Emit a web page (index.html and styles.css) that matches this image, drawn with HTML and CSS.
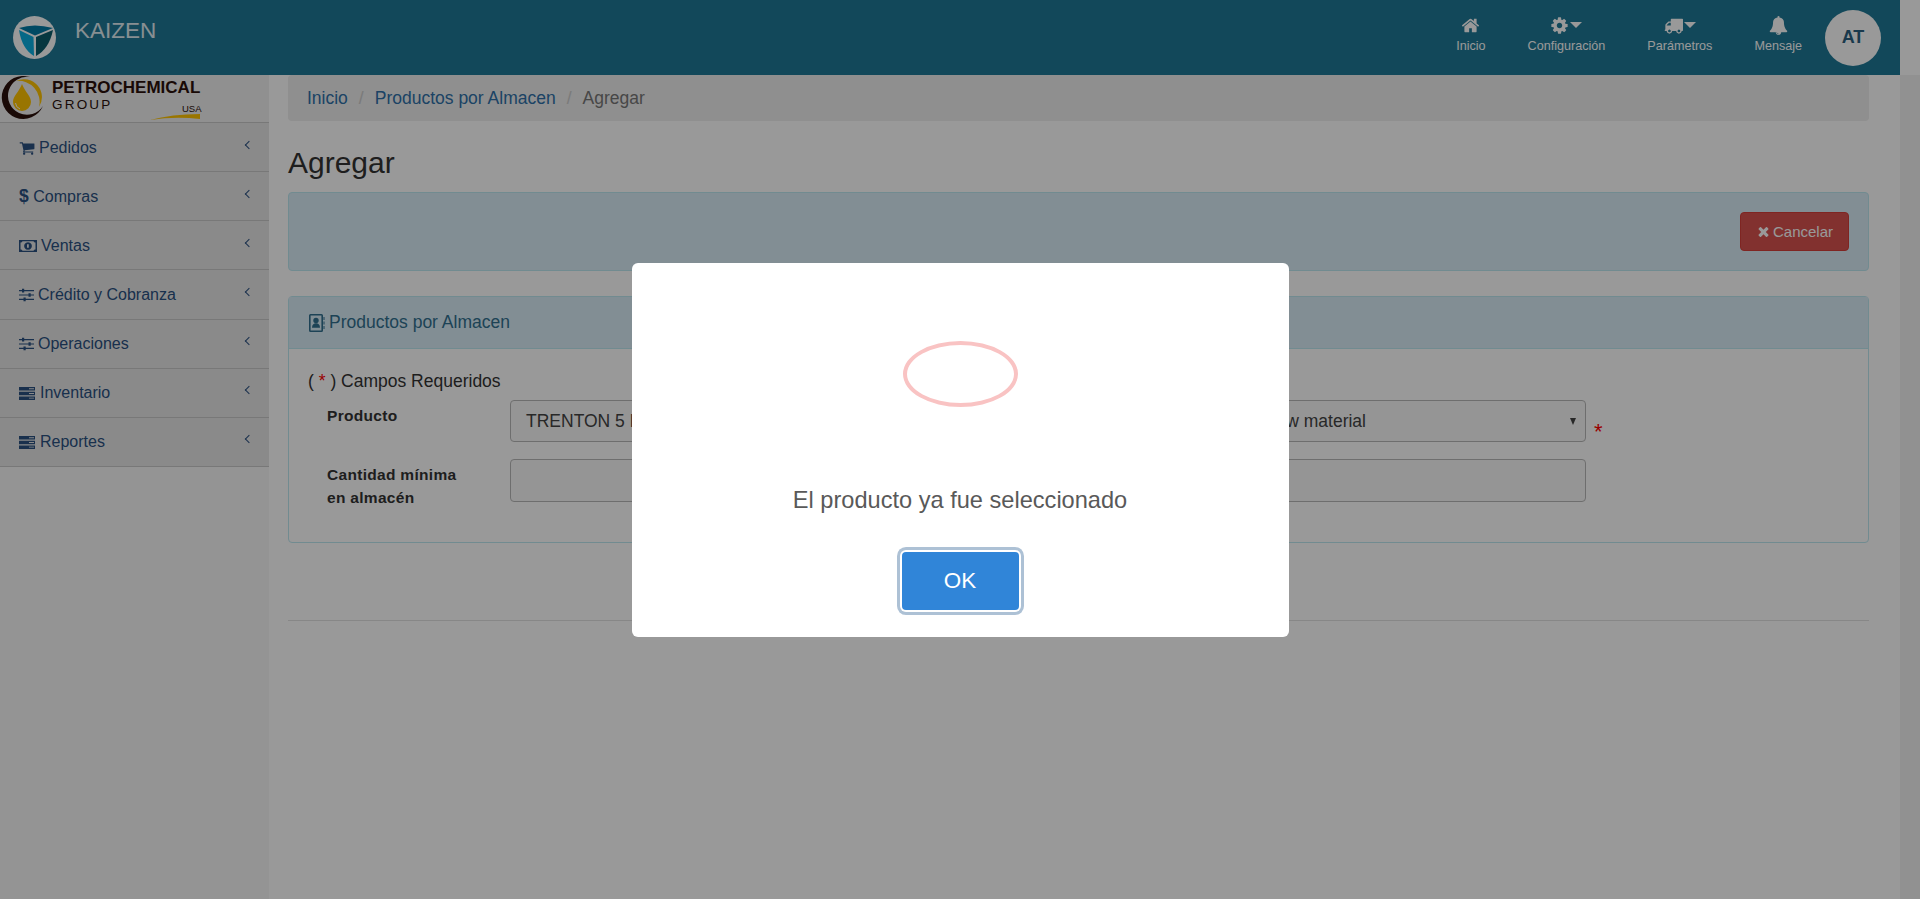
FILE: index.html
```html
<!DOCTYPE html>
<html>

<head>
  <title>Kaizen</title>
  <link rel="stylesheet" href="styles.css">
</head>

<body>
  <svg class="icon-defs" xmlns="http://www.w3.org/2000/svg">
    <symbol id="i-home" viewBox="0 0 1792 1792"><path d="M1472 992v480q0 26-19 45t-45 19h-384v-384h-256v384h-384q-26 0-45-19t-19-45v-480q0-1 .5-3t.5-3l575-474 575 474q1 2 1 6zm223-69l-62 74q-8 9-21 11h-3q-13 0-21-7l-692-577-692 577q-12 8-24 7-13-2-21-11l-62-74q-8-10-7-23.5t11-21.5l719-599q32-26 76-26t76 26l244 204v-195q0-14 9-23t23-9h192q14 0 23 9t9 23v408l219 182q10 8 11 21.5t-7 23.5z"/></symbol>
    <symbol id="i-cog" viewBox="0 0 1792 1792"><path d="M1152 896q0-106-75-181t-181-75-181 75-75 181 75 181 181 75 181-75 75-181zm512-109v222q0 12-8 23t-20 13l-185 28q-19 54-39 91 35 50 107 138 10 12 10 25t-9 23q-27 37-99 108t-94 71q-12 0-26-9l-138-108q-44 23-91 38-16 136-29 186-7 28-36 28h-222q-14 0-24.5-8.5t-11.5-21.5l-28-184q-49-16-90-37l-141 107q-10 9-25 9-14 0-25-11-126-114-165-168-7-10-7-23 0-12 8-23 15-21 51-66.5t54-70.5q-27-50-41-99l-183-27q-13-2-21-12.5t-8-23.5v-222q0-12 8-23t19-13l186-28q14-46 39-92-40-57-107-138-10-12-10-24 0-10 9-23 26-36 98.5-107.5t94.5-71.5q13 0 26 10l138 107q44-23 91-38 16-136 29-186 7-28 36-28h222q14 0 24.5 8.5t11.5 21.5l28 184q49 16 90 37l142-107q9-9 24-9 13 0 25 10 129 119 165 170 7 8 7 22 0 12-8 23-15 21-51 66.5t-54 70.5q26 50 41 98l183 28q13 2 21 12.5t8 23.5z"/></symbol>
    <symbol id="i-truck" viewBox="0 0 1792 1792"><path d="M640 1408q0-52-38-90t-90-38-90 38-38 90 38 90 90 38 90-38 38-90zm-384-512h384v-256h-158q-13 0-22 9l-195 195q-9 9-9 22v30zm1280 512q0-52-38-90t-90-38-90 38-38 90 38 90 90 38 90-38 38-90zm256-1088v1024q0 15-4 26.5t-13.5 18.5-16.5 11.5-23.5 6-22.5 2-25.5 0-22.5-.5q0 106-75 181t-181 75-181-75-75-181h-384q0 106-75 181t-181 75-181-75-75-181h-64q-3 0-22.5.5t-25.5 0-22.5-2-23.5-6-16.5-11.5-13.5-18.5-4-26.5q0-26 19-45t45-19v-320q0-8-.5-35t0-38 2.5-34.5 6.5-37 14-30.5 22.5-30l198-198q19-19 50.5-32t58.5-13h160v-192q0-26 19-45t45-19h1024q26 0 45 19t19 45z"/></symbol>
    <symbol id="i-bell" viewBox="0 0 1792 1792"><path d="M912 1696q0-16-16-16-59 0-101.5-42.5t-42.5-101.5q0-16-16-16t-16 16q0 73 51.5 124.5t124.5 51.5q16 0 16-16zm816-288q0 52-38 90t-90 38h-448q0 106-75 181t-181 75-181-75-75-181h-448q-52 0-90-38t-38-90q50-42 91-88t85-119.5 74.5-158.5 50-206 19.5-260q0-152 117-282.5t307-158.5q-8-19-8-39 0-40 28-68t68-28 68 28 28 68q0 20-8 39 190 28 307 158.5t117 282.5q0 139 19.5 260t50 206 74.5 158.5 85 119.5 91 88z"/></symbol>
    <symbol id="i-cart" viewBox="0 0 1792 1792"><path d="M704 1536q0 52-38 90t-90 38-90-38-38-90 38-90 90-38 90 38 38 90zm896 0q0 52-38 90t-90 38-90-38-38-90 38-90 90-38 90 38 38 90zm128-1088v512q0 24-16.5 42.5t-40.5 21.5l-1044 122q13 60 13 70 0 16-24 64h920q26 0 45 19t19 45-19 45-45 19h-1024q-26 0-45-19t-19-45q0-11 8-31.5t16-36 21.5-40 15.5-29.5l-177-823h-204q-26 0-45-19t-19-45 19-45 45-19h256q16 0 28.5 6.5t19.5 15.5 13 24.5 8 26 5.5 29.5 4.5 26h1201q26 0 45 19t19 45z"/></symbol>
    <symbol id="i-times" viewBox="0 0 1792 1792"><path d="M1490 1322q0 40-28 68l-136 136q-28 28-68 28t-68-28l-294-294-294 294q-28 28-68 28t-68-28l-136-136q-28-28-28-68t28-68l294-294-294-294q-28-28-28-68t28-68l136-136q28-28 68-28t68 28l294 294 294-294q28-28 68-28t68 28l136 136q28 28 28 68t-28 68l-294 294 294 294q28 28 28 68z"/></symbol>
    <symbol id="i-sliders" viewBox="0 0 15 13"><path d="M0 1.5h15v1.2H0zM0 5.9h15v1.2H0zM0 10.3h15v1.2H0z"/><path d="M3 .3h2.2v3.600H3zM9.500 4.700h2.200v3.600H9.500zM4.500 9.100h2.200v3.600H4.500z"/></symbol>
    <symbol id="i-money" viewBox="0 0 18 12"><path fill-rule="evenodd" d="M0 0h18v12H0zM1.500 2.500v7a2 2 0 0 1 2 1.200h11a2 2 0 0 1 2-1.200v-7a2 2 0 0 1-2-1.200h-11a2 2 0 0 1-2 1.200z"/><path fill-rule="evenodd" d="M9 2.200a3.800 3.800 0 1 0 .01 0zM8 4.300h1.800v3.500H8z"/></symbol>
    <symbol id="i-server" viewBox="0 0 16 13"><path fill-rule="evenodd" d="M0 0h16v3.500H0zM10 1.300v.9h5v-.9zM0 4.700h16v3.500H0zM10 6v.9h5V6zM0 9.400h16v3.500H0zM10 10.700v.9h5v-.9z"/></symbol>
    <symbol id="i-contact" viewBox="0 0 16 18"><path fill-rule="evenodd" d="M2 0h11a1.500 1.500 0 0 1 1.500 1.500v15A1.500 1.500 0 0 1 13 18H2a1.500 1.500 0 0 1-1.500-1.500v-15A1.500 1.500 0 0 1 2 0zm.1 1.600v14.800h10.800V1.600z"/><circle cx="7.500" cy="6.500" r="2.700"/><path d="M3.500 13.800c0-3 1.500-4.500 4-4.500s4 1.500 4 4.500z"/><path d="M15 3h1v3h-1zM15 7.500h1v3h-1zM15 12h1v3h-1z"/></symbol>
  </svg>

  <header class="topbar">
    <div class="brand">
      <svg class="brand-logo" viewBox="0 0 43 43">
        <circle cx="21.5" cy="21.5" r="21.5" fill="#fff"/>
        <path d="M6 12 Q21 7 40 12 L22 19.500z" fill="#007aa6"/>
        <path d="M6 14 L20.500 21 L21 40 Q9 33 6 14z" fill="#0aaee0"/>
        <path d="M40 14 L23 21 L23 40 Q36 33 40 14z" fill="#0a5c6c"/>
      </svg>
      <span class="brand-name">KAIZEN</span>
    </div>
    <nav class="topnav">
      <a class="topnav-item"><span class="topnav-icons"><svg class="nav-icon"><use href="#i-home"/></svg></span>Inicio</a>
      <a class="topnav-item"><span class="topnav-icons"><svg class="nav-icon"><use href="#i-cog"/></svg><i class="caret"></i></span>Configuración</a>
      <a class="topnav-item"><span class="topnav-icons"><svg class="nav-icon"><use href="#i-truck"/></svg><i class="caret"></i></span>Parámetros</a>
      <a class="topnav-item"><span class="topnav-icons"><svg class="nav-icon"><use href="#i-bell"/></svg></span>Mensaje</a>
    </nav>
    <div class="avatar">AT</div>
  </header>

  <div class="layout">
    <aside class="sidebar">
      <div class="company">
        <svg class="company-mark" viewBox="0 0 46 46">
          <path d="M30 2 A21.5 21.5 0 1 0 43 31 A19 19 0 1 1 30 2z" fill="#2a0f0a"/>
          <path d="M16 6 A18 18 0 0 1 39 32 A21 21 0 0 0 16 6z" fill="#ffc400"/>
          <path d="M22 9 C25 17 31 21 31 27 A9 9 0 0 1 13 27 C13 21 19 17 22 9z" fill="#ffc400"/>
          <path d="M15.500 28 A7 7 0 0 0 20 34" fill="none" stroke="#fff" stroke-width="1"/>
        </svg>
        <div class="company-text">
          <span class="company-name">PETROCHEMICAL</span>
          <span class="company-group">GROUP</span>
        </div>
        <span class="company-usa">USA</span>
        <svg class="company-swoosh" viewBox="0 0 50 6"><path d="M0 6 Q22 0 50 0 L50 5 Q25 2 0 6z" fill="#ffc400"/></svg>
      </div>
      <ul class="menu">
        <li class="menu-item"><svg class="menu-icon cart"><use href="#i-cart"/></svg>Pedidos<span class="chevron"></span></li>
        <li class="menu-item"><b class="menu-dollar">$</b>Compras<span class="chevron"></span></li>
        <li class="menu-item"><svg class="menu-icon money"><use href="#i-money"/></svg>Ventas<span class="chevron"></span></li>
        <li class="menu-item"><svg class="menu-icon"><use href="#i-sliders"/></svg>Crédito y Cobranza<span class="chevron"></span></li>
        <li class="menu-item"><svg class="menu-icon"><use href="#i-sliders"/></svg>Operaciones<span class="chevron"></span></li>
        <li class="menu-item"><svg class="menu-icon server"><use href="#i-server"/></svg>Inventario<span class="chevron"></span></li>
        <li class="menu-item"><svg class="menu-icon server"><use href="#i-server"/></svg>Reportes<span class="chevron"></span></li>
      </ul>
    </aside>

    <main class="content">
      <ol class="breadcrumb">
        <li><a>Inicio</a></li>
        <li class="sep">/</li>
        <li><a>Productos por Almacen</a></li>
        <li class="sep">/</li>
        <li class="current">Agregar</li>
      </ol>

      <h1 class="page-title">Agregar</h1>

      <div class="panel toolbar">
        <button class="btn-cancel"><svg class="btn-icon"><use href="#i-times"/></svg>Cancelar</button>
      </div>

      <section class="panel">
        <div class="panel-heading"><svg class="heading-icon"><use href="#i-contact"/></svg>Productos por Almacen</div>
        <div class="panel-body">
          <p class="required-note">( <span class="red">*</span> ) Campos Requeridos</p>
          <div class="form-row">
            <label class="form-label">Producto</label>
            <div class="select-box"><span>TRENTON 5 L</span><span class="select-end">raw material</span></div>
            <span class="req-star">*</span>
          </div>
          <div class="form-row">
            <label class="form-label">Cantidad mínima<br>en almacén</label>
            <div class="text-box"></div>
          </div>
        </div>
      </section>

      <hr class="divider">
    </main>
    <div class="gutter"></div>
  </div>

  <div class="overlay">
    <div class="modal">
      <div class="modal-ring"></div>
      <p class="modal-text">El producto ya fue seleccionado</p>
      <button class="modal-ok">OK</button>
    </div>
  </div>
</body>

</html>
```

FILE: styles.css
```css
* {
  box-sizing: border-box;
}

html,
body {
  height: 100%;
}

body {
  margin: 0;
  overflow: hidden;
  font-family: "Liberation Sans", Arial, sans-serif;
  font-size: 17.5px;
  color: #333;
  background-color: #fff;
}

a {
  color: #2f70a8;
  text-decoration: none;
}

.icon-defs {
  display: none;
}

svg {
  fill: currentColor;
}

/* top bar */
.topbar {
  display: flex;
  align-items: center;
  width: 1900px;
  height: 75px;
  padding: 0 19px 0 13px;
  background-color: #1e7896;
}

.brand {
  display: flex;
  align-items: center;
  margin-bottom: 7px;
}

.brand-logo {
  width: 43px;
  height: 43px;
  margin-top: 7px;
}

.brand-name {
  margin-left: 19px;
  margin-bottom: 6px;
  font-size: 22.5px;
  color: #e2eef3;
}

.topnav {
  display: flex;
  margin-left: auto;
  margin-bottom: 7px;
}

.topnav-item {
  display: flex;
  flex-direction: column;
  align-items: center;
  padding: 0 21px;
  font-size: 12.6px;
  color: #fff;
}

.topnav-icons {
  display: flex;
  align-items: center;
  height: 19px;
  margin-bottom: 4px;
}

.nav-icon {
  width: 19px;
  height: 19px;
}

.caret {
  width: 0;
  height: 0;
  margin-left: 1px;
  border-left: 6px solid transparent;
  border-right: 6px solid transparent;
  border-top: 6px solid #fff;
}

.avatar {
  display: flex;
  align-items: center;
  justify-content: center;
  width: 56px;
  height: 56px;
  margin-left: 2px;
  border-radius: 50%;
  background-color: #fff;
  font-size: 18px;
  font-weight: bold;
  color: #2c6080;
}

/* page columns */
.layout {
  display: flex;
  height: calc(100% - 75px);
}

.sidebar {
  flex: none;
  width: 269px;
  background-color: #f7f7f7;
}

.company {
  position: relative;
  display: flex;
  height: 48px;
  border-bottom: 1px solid #c8c8c8;
  background-color: #f0f0f0;
}

.company-mark {
  width: 46px;
  height: 46px;
}

.company-text {
  display: flex;
  flex-direction: column;
  margin-left: 6px;
  padding-top: 4px;
}

.company-name {
  font-size: 17px;
  font-weight: bold;
  line-height: 18px;
  color: #2a0f0a;
}

.company-group {
  font-size: 13.5px;
  line-height: 15px;
  letter-spacing: 2.2px;
  color: #2a0f0a;
}

.company-usa {
  position: absolute;
  left: 182px;
  top: 28px;
  font-size: 9.5px;
  color: #2a0f0a;
}

.company-swoosh {
  position: absolute;
  left: 150px;
  top: 39px;
  width: 50px;
  height: 6px;
}

.menu {
  margin: 0;
  padding: 0;
  list-style: none;
}

.menu-item {
  display: flex;
  align-items: center;
  height: 49.15px;
  padding: 1px 19px 0;
  border-bottom: 1px solid #c8c8c8;
  background-color: #e6e6e6;
  font-size: 16px;
  color: #2a5080;
}

.menu-icon {
  flex: none;
  width: 15px;
  height: 14px;
  margin-right: 4px;
}

.menu-icon.cart {
  width: 16px;
  height: 16px;
}

.menu-icon.money {
  width: 18px;
  height: 12px;
  margin-right: 4px;
}

.menu-icon.server {
  width: 16px;
  height: 13px;
  margin-right: 5px;
}

.menu-dollar {
  margin-right: 4.5px;
  font-size: 17.5px;
}

.chevron {
  width: 6px;
  height: 6px;
  margin-left: auto;
  margin-right: -1.5px;
  margin-bottom: 6px;
  border-left: 1.5px solid #2a5080;
  border-bottom: 1.5px solid #2a5080;
  transform: rotate(45deg);
}

/* main column */
.content {
  flex: none;
  width: 1631px;
  padding: 0 31px 0 19px;
}

.gutter {
  flex: 1;
  background-color: #f2f2f2;
}

.breadcrumb {
  display: flex;
  gap: 11px;
  height: 46px;
  margin: 0;
  padding: 13px 19px 0;
  border-radius: 4px;
  background-color: #eee;
  list-style: none;
}

.sep {
  color: #ccc;
}

.current {
  color: #777;
}

.page-title {
  margin: 25px 0 13px;
  font-size: 30px;
  font-weight: normal;
  line-height: 33px;
}

.panel {
  margin-bottom: 25px;
  border: 1px solid #bce8f1;
  border-radius: 4px;
  background-color: #fff;
}

.toolbar {
  display: flex;
  justify-content: flex-end;
  align-items: flex-start;
  height: 79px;
  padding: 19px 19px 0;
  background-color: #d9edf7;
}

.btn-cancel {
  display: flex;
  align-items: center;
  justify-content: center;
  width: 109px;
  height: 39px;
  padding: 0;
  border: 1px solid #d43f3a;
  border-radius: 4px;
  background-color: #d9534f;
  font-family: inherit;
  font-size: 15px;
  color: #fff;
}

.btn-icon {
  width: 15px;
  height: 15px;
  margin-right: 2px;
}

.panel-heading {
  display: flex;
  align-items: center;
  height: 52px;
  padding: 0 19px;
  border-bottom: 1px solid #bce8f1;
  background-color: #d9edf7;
  color: #31708f;
}

.heading-icon {
  width: 17px;
  height: 18px;
  margin-right: 4px;
}

.panel-body {
  height: 193px;
  padding: 20px 19px 0;
}

.required-note {
  margin: 0 0 7px;
  line-height: 24px;
}

.red {
  color: #f00;
}

.form-row {
  display: flex;
  align-items: flex-start;
  margin: 0 0 15px;
  padding-left: 19px;
}

.form-label {
  flex: none;
  width: 183px;
  padding-top: 4px;
  font-size: 15.5px;
  font-weight: bold;
  line-height: 23px;
  letter-spacing: .3px;
}

.select-box,
.text-box {
  position: relative;
  display: flex;
  align-items: center;
  width: 1076px;
  height: 42px;
  padding: 0 15px;
  border: 1px solid #b8b8b8;
  border-radius: 4px;
  background-color: #f9f9f9;
  color: #444;
}

.text-box {
  height: 43px;
}

.select-box::after {
  content: "";
  position: absolute;
  right: 9px;
  top: 17px;
  border-left: 3.5px solid transparent;
  border-right: 3.5px solid transparent;
  border-top: 7px solid #444;
}

.select-end {
  margin-left: auto;
  margin-right: 204px;
}

.req-star {
  margin: 20px 0 0 8px;
  font-size: 22px;
  line-height: 24px;
  color: #f00;
}

.divider {
  margin: 77px 0 0;
  border: 0;
  border-top: 1px solid #e2e2e2;
}

/* alert dialog */
.overlay {
  position: fixed;
  top: 0;
  left: 0;
  right: 0;
  bottom: 0;
  display: flex;
  align-items: center;
  justify-content: center;
  background-color: rgba(0, 0, 0, .4);
}

.modal {
  display: flex;
  flex-direction: column;
  align-items: center;
  width: 657px;
  height: 374px;
  padding-top: 78px;
  border-radius: 6px;
  background-color: #fff;
}

.modal-ring {
  width: 115px;
  height: 66px;
  margin-left: 1px;
  border: 4px solid #f9c3c3;
  border-radius: 50%;
}

.modal-text {
  margin: 79px 0 0;
  font-size: 23.6px;
  line-height: 28px;
  color: #595959;
}

.modal-ok {
  width: 117px;
  height: 58px;
  margin-top: 38px;
  border: 0;
  border-radius: 4px;
  background-color: #3085d8;
  box-shadow: 0 0 0 2px #fff, 0 0 0 5px rgba(50, 100, 150, .4);
  font-family: inherit;
  font-size: 22.4px;
  color: #fff;
}
```
